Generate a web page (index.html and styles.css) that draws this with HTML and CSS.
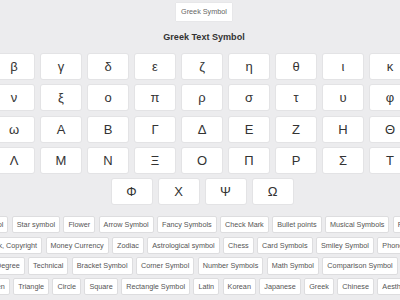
FILE: index.html
```html
<!DOCTYPE html>
<html>
<head>
<meta charset="utf-8">
<link rel="stylesheet" href="styles.css">
</head>
<body>
<div class="page">
  <div class="head">
    <div class="crumb">Greek Symbol</div>
    <h1 class="title">Greek Text Symbol</h1>
  </div>
  <div class="grid">
    <div class="sym">α</div><div class="sym">β</div><div class="sym">γ</div><div class="sym">δ</div><div class="sym">ε</div><div class="sym">ζ</div><div class="sym">η</div><div class="sym">θ</div><div class="sym">ι</div><div class="sym">κ</div><div class="sym">λ</div>
    <div class="sym">μ</div><div class="sym">ν</div><div class="sym">ξ</div><div class="sym">ο</div><div class="sym">π</div><div class="sym">ρ</div><div class="sym">σ</div><div class="sym">τ</div><div class="sym">υ</div><div class="sym">φ</div><div class="sym">χ</div>
    <div class="sym">ψ</div><div class="sym">ω</div><div class="sym">Α</div><div class="sym">Β</div><div class="sym">Γ</div><div class="sym">Δ</div><div class="sym">Ε</div><div class="sym">Ζ</div><div class="sym">Η</div><div class="sym">Θ</div><div class="sym">Ι</div>
    <div class="sym">Κ</div><div class="sym">Λ</div><div class="sym">Μ</div><div class="sym">Ν</div><div class="sym">Ξ</div><div class="sym">Ο</div><div class="sym">Π</div><div class="sym">Ρ</div><div class="sym">Σ</div><div class="sym">Τ</div><div class="sym">Υ</div>
    <div class="sym">Φ</div><div class="sym">Χ</div><div class="sym">Ψ</div><div class="sym">Ω</div>
  </div>
  <div class="tags">
    <div class="tag-row">
      <a class="tag">Heart Symbol</a><a class="tag">Star symbol</a><a class="tag">Flower</a><a class="tag">Arrow Symbol</a><a class="tag">Fancy Symbols</a><a class="tag">Check Mark</a><a class="tag">Bullet points</a><a class="tag">Musical Symbols</a><a class="tag">Planet Symbol</a>
    </div>
    <div class="tag-row">
      <a class="tag">Trademark, Copyright</a><a class="tag">Money Currency</a><a class="tag">Zodiac</a><a class="tag">Astrological symbol</a><a class="tag">Chess</a><a class="tag">Card Symbols</a><a class="tag">Smiley Symbol</a><a class="tag">Phonetic Symbol</a>
    </div>
    <div class="tag-row">
      <a class="tag">Weather</a><a class="tag">Degree</a><a class="tag">Technical</a><a class="tag">Bracket Symbol</a><a class="tag">Corner Symbol</a><a class="tag">Number Symbols</a><a class="tag">Math Symbol</a><a class="tag">Comparison Symbol</a><a class="tag">Unit Symbols</a>
    </div>
    <div class="tag-row">
      <a class="tag">Pen</a><a class="tag">Triangle</a><a class="tag">Circle</a><a class="tag">Square</a><a class="tag">Rectangle Symbol</a><a class="tag">Latin</a><a class="tag">Korean</a><a class="tag">Japanese</a><a class="tag">Greek</a><a class="tag">Chinese</a><a class="tag">Aesthetic</a>
    </div>
  </div>
</div>
</body>
</html>
```
FILE: styles.css
```css
html, body {
  margin: 0;
  padding: 0;
  overflow: hidden;
  background: #ececee;
}

body {
  font-family: "Liberation Sans", Arial, sans-serif;
  color: #333;
}

.page {
  display: flex;
  flex-direction: column;
  align-items: center;
  padding: 3px 0 0 4px;
}

.head {
  display: flex;
  flex-direction: column;
  align-items: center;
  padding-left: 4px;
}

.crumb {
  background: #fff;
  color: #666;
  font-size: 7.26px;
  line-height: 18px;
  height: 18px;
  padding: 0 5px;
  box-shadow: 0 0 1px rgba(0, 0, 0, 0.12);
}

.title {
  margin: 11px 0 0;
  font-size: 9.07px;
  line-height: 11px;
  font-weight: bold;
  color: #333;
}

.grid {
  margin-top: 11px;
  width: 510px;
  flex-shrink: 0;
  display: flex;
  flex-wrap: wrap;
  justify-content: center;
  gap: 6.25px 7px;
}

.sym {
  width: 40px;
  height: 25px;
  background: #fff;
  border-radius: 2px;
  box-shadow: 0 0 0 1px rgba(0, 0, 0, 0.035);
  display: flex;
  align-items: center;
  justify-content: center;
  font-size: 13px;
  color: #333;
}

.tags {
  margin-top: 12px;
  display: flex;
  flex-direction: column;
  align-items: center;
  gap: 3.4px;
}

.tag-row {
  display: flex;
  flex-shrink: 0;
  gap: 3.4px;
  white-space: nowrap;
}

.tag {
  flex-shrink: 0;
  height: 17.3px;
  box-sizing: border-box;
  line-height: 15.3px;
  padding: 0 4px;
  border: 1px solid #dddddf;
  border-radius: 2px;
  background: #fff;
  font-size: 7.26px;
  color: #555;
}
```
